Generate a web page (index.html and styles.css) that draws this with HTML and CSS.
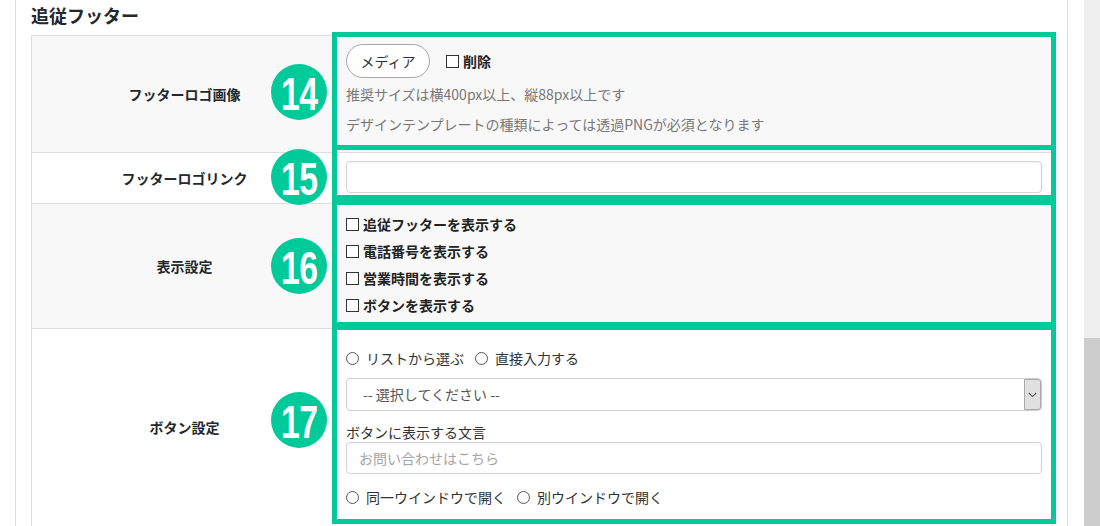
FILE: index.html
```html
<!DOCTYPE html>
<html lang="ja">
  <head>
    <meta charset="UTF-8">
    <meta name="viewport" content="width=device-width, initial-scale=1.0">
    <title>追従フッター</title>
    <link rel="stylesheet" href="styles.css">
  </head>

  <body>
    <div class="screen">
      <div class="page">
        <div class="panel">
          <h2 class="section-title">追従フッター</h2>
          <table class="form-table">
            <tr class="row-gray">
              <th>
                フッターロゴ画像
                <span class="badge badge-14"><span>14</span></span>
              </th>
              <td class="field field-logo hl hl-1">
                <div class="media-line">
                  <button class="btn-media" type="button">メディア</button>
                  <label class="check"><input type="checkbox">削除</label>
                </div>
                <p class="note">推奨サイズは横400px以上、縦88px以上です</p>
                <p class="note note-2">デザインテンプレートの種類によっては透過PNGが必須となります</p>
              </td>
            </tr>
            <tr>
              <th>
                フッターロゴリンク
                <span class="badge badge-15"><span>15</span></span>
              </th>
              <td class="field field-link hl hl-2">
                <input class="text-input" type="text">
              </td>
            </tr>
            <tr class="row-gray">
              <th>
                表示設定
                <span class="badge badge-16"><span>16</span></span>
              </th>
              <td class="field field-display hl hl-3">
                <label class="check"><input type="checkbox">追従フッターを表示する</label>
                <label class="check"><input type="checkbox">電話番号を表示する</label>
                <label class="check"><input type="checkbox">営業時間を表示する</label>
                <label class="check"><input type="checkbox">ボタンを表示する</label>
              </td>
            </tr>
            <tr>
              <th class="th-last">
                ボタン設定
                <span class="badge badge-17"><span>17</span></span>
              </th>
              <td class="field field-button hl hl-4">
                <div class="radio-line">
                  <label class="radio"><input type="radio" name="src">リストから選ぶ</label>
                  <label class="radio"><input type="radio" name="src">直接入力する</label>
                </div>
                <div class="select-box">
                  <span class="select-text">-- 選択してください --</span>
                  <span class="select-arrow">
                    <svg width="9" height="6" viewBox="0 0 9 6"><path d="M0.8 1 L4.5 4.6 L8.2 1" fill="none" stroke="#555" stroke-width="1.1"/></svg>
                  </span>
                </div>
                <div class="field-label">ボタンに表示する文言</div>
                <input class="text-input" type="text" placeholder="お問い合わせはこちら">
                <div class="radio-line radio-line-last">
                  <label class="radio"><input type="radio" name="win">同一ウインドウで開く</label>
                  <label class="radio"><input type="radio" name="win">別ウインドウで開く</label>
                </div>
              </td>
            </tr>
          </table>
        </div>
      </div>
      <div class="scrollbar">
        <div class="scroll-thumb"></div>
      </div>
    </div>
  </body>
</html>
```

FILE: styles.css
```css
* {
  margin: 0;
  padding: 0;
  box-sizing: border-box;
}

html,
body {
  height: 100%;
  overflow: hidden;
}

body {
  background-color: #fff;
  font-family: "Noto Sans CJK JP", "Noto Sans", sans-serif;
  font-size: 14px;
  color: #333;
}

.screen {
  display: flex;
  height: 100%;
}

.page {
  flex: 1;
  padding-left: 15px;
}

.panel {
  width: 1053px;
  height: 100%;
  border-left: 1px solid #ddd;
  border-right: 1px solid #ddd;
  padding: 0 14px 0 15px;
}

.section-title {
  font-size: 18px;
  line-height: 24px;
  font-weight: bold;
  color: #23282d;
  padding: 3px 0 8px;
}

/* table */

.form-table {
  width: 1022px;
  table-layout: fixed;
  border-collapse: separate;
  border-spacing: 0;
  border-top: 1px solid #ddd;
  border-left: 1px solid #ddd;
  border-right: 1px solid #ddd;
}

.form-table tr {
  background-color: #fff;
}

.form-table .row-gray {
  background-color: #f8f8f8;
}

.form-table th {
  position: relative;
  width: 300px;
  padding-left: 5px;
  text-align: center;
  vertical-align: middle;
  font-size: 14px;
  font-weight: bold;
  color: #23282d;
  border-bottom: 1px solid #ddd;
}

.form-table .th-last {
  padding-bottom: 6px;
}

.form-table td {
  position: relative;
  vertical-align: top;
  border-bottom: 1px solid #ddd;
}

/* number badges */

.badge {
  position: absolute;
  right: 5px;
  top: 50%;
  width: 56px;
  height: 56px;
  margin-top: -28px;
  border-radius: 50%;
  background-color: #00c99a;
  display: flex;
  align-items: center;
  justify-content: center;
  z-index: 2;
}

.badge span {
  display: block;
  font-family: "Liberation Sans", Arial, sans-serif;
  font-weight: bold;
  font-size: 47px;
  line-height: 1;
  color: #fff;
  letter-spacing: -1px;
  transform: scaleX(0.72);
  margin-top: 2px;
}

.badge-14 {
  margin-top: -30px;
}

.badge-15 {
  margin-top: -29px;
}

.badge-17 {
  margin-top: -38px;
}

/* green highlight frames */

.hl::after {
  content: "";
  position: absolute;
  left: 0;
  right: -4px;
  border: 5px solid #00c99a;
  z-index: 1;
  pointer-events: none;
}

.hl-1::after {
  top: -4px;
  bottom: 2px;
}

.hl-2::after {
  top: -8px;
  bottom: -2px;
}

.hl-3::after {
  top: -9px;
  bottom: -2px;
}

.hl-4::after {
  top: -7px;
  bottom: 7px;
}

/* fields */

.field {
  padding: 8px 10px 10px 14px;
}

.field-logo {
  padding-bottom: 18px;
}

.field-display {
  padding-top: 7px;
  padding-bottom: 9px;
}

.field-button {
  padding-top: 19px;
  padding-bottom: 24px;
}

.media-line {
  display: flex;
  align-items: center;
  gap: 16px;
}

.btn-media {
  width: 84px;
  height: 34px;
  border: 1px solid #a8a8a8;
  border-radius: 17px;
  background-color: #fff;
  font-family: inherit;
  font-size: 14px;
  color: #333;
  cursor: pointer;
}

.note {
  margin-top: 6px;
  line-height: 20px;
  color: #777;
}

.note-2 {
  margin-top: 10px;
}

.check {
  display: flex;
  align-items: center;
  font-weight: bold;
  color: #222;
  line-height: 27px;
}

.check input {
  appearance: none;
  width: 13px;
  height: 13px;
  border: 1px solid #333;
  background-color: #fff;
  margin: 0 4px 0 0;
}

.text-input {
  display: block;
  width: 100%;
  height: 32px;
  border: 1px solid #d4d4d4;
  border-radius: 4px;
  padding: 0 12px;
  font-family: inherit;
  font-size: 14px;
  color: #333;
  background-color: #fff;
  box-shadow: inset 0 1px 2px rgba(0, 0, 0, 0.04);
}

.text-input::placeholder {
  color: #a5a5a5;
}

.radio-line {
  display: flex;
  align-items: center;
  gap: 11px;
  line-height: 20px;
}

.radio-line-last {
  margin-top: 13px;
}

.radio {
  display: flex;
  align-items: center;
  color: #333;
}

.radio input {
  appearance: none;
  width: 13px;
  height: 13px;
  border: 1px solid #555;
  border-radius: 50%;
  background-color: #fff;
  margin: 0 7px 0 0;
}

.select-box {
  display: flex;
  align-items: stretch;
  height: 33px;
  margin-top: 10px;
  border: 1px solid #cfcfcf;
  border-radius: 4px;
  background-color: #fff;
}

.select-text {
  flex: 1;
  padding-left: 16px;
  line-height: 31px;
  color: #555;
}

.select-arrow {
  width: 17px;
  display: flex;
  align-items: center;
  justify-content: center;
  background-color: #e1e1e1;
  border: 1px solid #a9a9a9;
  border-radius: 0 3px 3px 0;
}

.field-label {
  margin-top: 11px;
  line-height: 20px;
  color: #333;
}

/* fake window scrollbar */

.scrollbar {
  width: 16px;
  margin-left: 16px;
  background-color: #f0f0f0;
  position: relative;
}

.scroll-thumb {
  margin-top: 338px;
  height: calc(100% - 338px);
  background-color: #cdcdcd;
}
```
